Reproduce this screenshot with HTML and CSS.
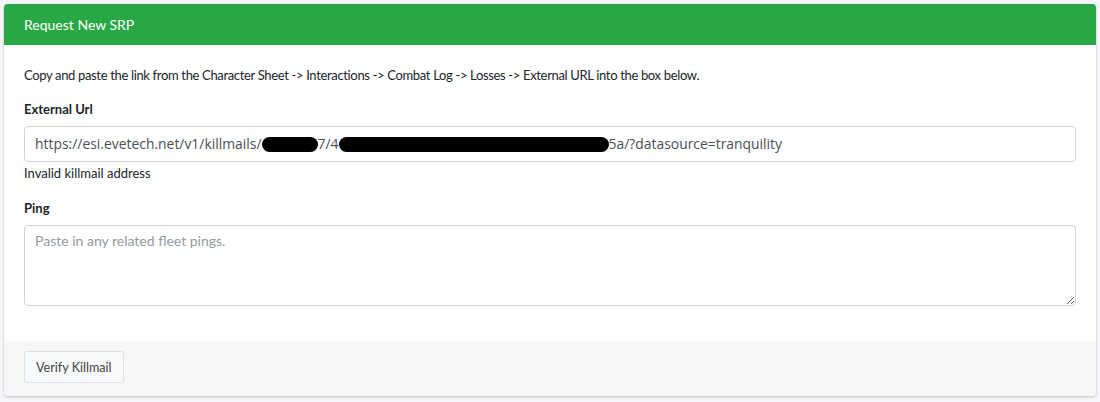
FILE: index.html
```html
<!DOCTYPE html>
<html lang="en">

<head>
    <meta charset="UTF-8">
    <meta name="viewport" content="width=device-width, initial-scale=1.0">
    <title>Request New SRP</title>
    <link rel="stylesheet" href="styles.css">
</head>

<body>
    <div class="card">
        <div class="card-header">Request New SRP</div>
        <div class="card-body">
            <p class="intro">Copy and paste the link from the Character Sheet -&gt; Interactions -&gt; Combat Log -&gt; Losses -&gt; External URL into the box below.</p>
            <div class="form-group">
                <label for="url">External Url</label>
                <div class="url-input" id="url">https://esi.evetech.net/v1/killmails/<span class="redact redact-short"></span>7/4<span class="redact redact-long"></span>5a/?datasource=tranquility</div>
                <div class="feedback">Invalid killmail address</div>
            </div>
            <div class="form-group">
                <label for="ping">Ping</label>
                <textarea id="ping" placeholder="Paste in any related fleet pings."></textarea>
            </div>
        </div>
        <div class="card-footer">
            <button class="verify-btn">Verify Killmail</button>
        </div>
    </div>
</body>

</html>
```

FILE: styles.css
```css
body {
    background-color: #f4f6f9;
    color: #212529;
    font-family: Lato, "Liberation Sans", sans-serif;
    font-size: 13px;
    margin: 0;
    padding: 4px;
}

.card {
    background-color: white;
    border-radius: 4px;
    box-shadow: 0 0 1px rgba(0, 0, 0, 0.125), 0 1px 3px rgba(0, 0, 0, 0.2);
    overflow: hidden;
}

.card-header {
    background-color: #28a745;
    color: white;
    font-size: 14px;
    height: 41px;
    line-height: 41px;
    padding: 0 20px;
}

.card-body {
    padding: 20px 20px 20px;
}

.intro {
    margin: 0 0 14px;
    line-height: 20px;
    letter-spacing: -0.34px;
}

.form-group {
    margin-bottom: 15px;
}

.form-group label {
    display: block;
    font-weight: bold;
    line-height: 20px;
    margin-bottom: 7px;
}

.url-input {
    height: 36px;
    line-height: 34px;
    box-sizing: border-box;
    border: 1px solid #ced4da;
    border-radius: 4px;
    padding: 0 10px;
    color: #495057;
    font-family: "Open Sans", sans-serif;
    font-size: 13.9px;
    white-space: nowrap;
}

.redact {
    display: inline-block;
    height: 15px;
    background-color: black;
    border-radius: 8px;
    vertical-align: -3px;
}

.redact-short {
    width: 56px;
}

.redact-long {
    width: 270px;
}

.feedback {
    line-height: 20px;
    margin-top: 1px;
}

textarea {
    display: block;
    width: 100%;
    height: 81px;
    box-sizing: border-box;
    border: 1px solid #ced4da;
    border-radius: 4px;
    padding: 6px 10px;
    font-family: Lato, "Liberation Sans", sans-serif;
    font-size: 14px;
    color: #495057;
}

textarea::placeholder {
    color: #939ba2;
}

.card-footer {
    background-color: #f7f7f7;
    padding: 10px 20px 13px;
}

.verify-btn {
    background-color: #f8f9fa;
    border: 1px solid #dee2e6;
    border-radius: 3px;
    color: #444;
    font-family: Lato, "Liberation Sans", sans-serif;
    font-size: 12.6px;
    height: 32px;
    padding: 0 11px;
}
```
